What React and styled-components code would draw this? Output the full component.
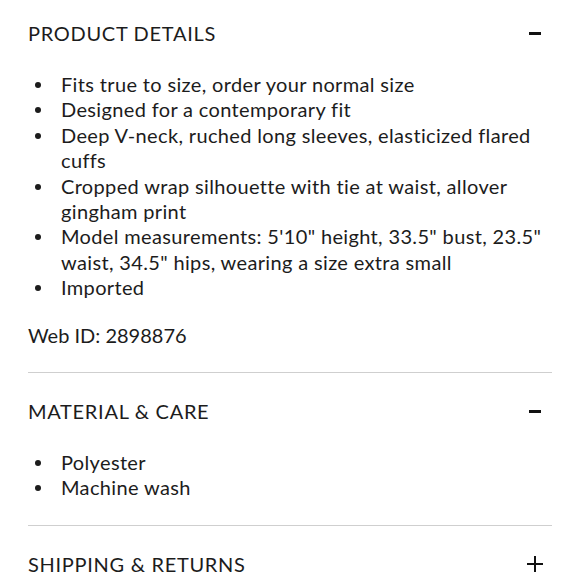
import React from 'react';
import styled, {createGlobalStyle} from 'styled-components';

const GlobalStyle = createGlobalStyle`
  html, body {
    margin: 0;
    padding: 0;
    background: #fff;
  }
  body {
    font-family: "Lato", "Noto Sans", sans-serif;
    color: #1c1c1c;
  }
`

const Page = styled.div`
  width: 578px;
  height: 580px;
  overflow: hidden;
  padding: 0 26px 0 28px;
  box-sizing: border-box;
`

const Section = styled.section`
  border-top: ${props => props.first ? 'none' : '1px solid #cfcfcf'};
  padding-top: ${props => props.first ? '8px' : '13px'};
  padding-bottom: 24px;
`

const Header = styled.div`
  height: 50px;
  display: flex;
  align-items: center;
  justify-content: space-between;
`

const Title = styled.h2`
  margin: 0;
  font-size: 20px;
  font-weight: 400;
  letter-spacing: 0.7px;
  text-transform: uppercase;
`

const Toggle = styled.span`
  width: 16px;
  height: 16px;
  margin-right: 9px;
  display: flex;
  align-items: center;
  justify-content: center;
`

const List = styled.ul`
  list-style: none;
  margin: 14px 0 0;
  padding: 0;
`

const Item = styled.li`
  display: flex;
  font-size: 20px;
  line-height: 25.4px;
  letter-spacing: 0.35px;
`

const Dot = styled.span`
  flex: none;
  width: 6px;
  height: 6px;
  border-radius: 50%;
  background: #1c1c1c;
  margin: 10px 20px 0 7px;
`

const Note = styled.p`
  margin: 22px 0 0;
  font-size: 20px;
  line-height: 25.4px;
  letter-spacing: 0;
`

const Minus = () => (
    <svg width="12" height="3" viewBox="0 0 12 3">
        <rect width="12" height="3" fill="#111"/>
    </svg>
)

const Plus = () => (
    <svg width="16" height="16" viewBox="0 0 16 16">
        <rect x="7" y="0" width="2" height="16" fill="#111"/>
        <rect x="0" y="7" width="16" height="2" fill="#111"/>
    </svg>
)

const details = [
    'Fits true to size, order your normal size',
    'Designed for a contemporary fit',
    'Deep V-neck, ruched long sleeves, elasticized flared cuffs',
    'Cropped wrap silhouette with tie at waist, allover gingham print',
    'Model measurements: 5\'10" height, 33.5" bust, 23.5" waist, 34.5" hips, wearing a size extra small',
    'Imported',
]

const care = ['Polyester', 'Machine wash']

const Bullets = ({items}) => (
    <List>
        {items.map(text => (
            <Item key={text}><Dot/><span>{text}</span></Item>
        ))}
    </List>
)

const App = () => {
    return (
        <Page>
            <GlobalStyle/>
            <Section first>
                <Header>
                    <Title>Product Details</Title>
                    <Toggle><Minus/></Toggle>
                </Header>
                <Bullets items={details}/>
                <Note>Web ID: 2898876</Note>
            </Section>
            <Section>
                <Header>
                    <Title>Material &amp; Care</Title>
                    <Toggle><Minus/></Toggle>
                </Header>
                <Bullets items={care}/>
            </Section>
            <Section>
                <Header>
                    <Title>Shipping &amp; Returns</Title>
                    <Toggle><Plus/></Toggle>
                </Header>
            </Section>
        </Page>
    );
};

export default App;
